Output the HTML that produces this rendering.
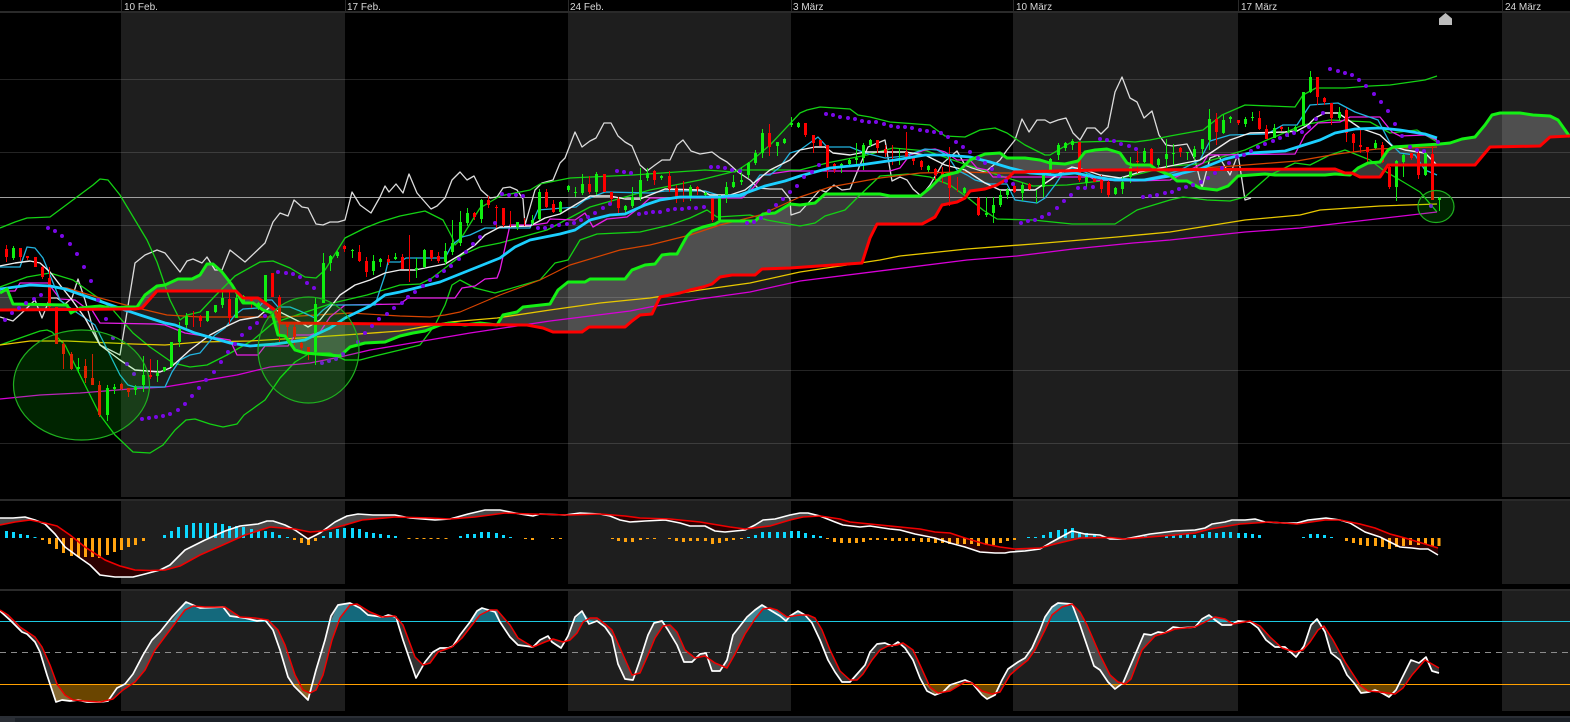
<!DOCTYPE html>
<html><head><meta charset="utf-8"><title>Chart</title>
<style>html,body{margin:0;padding:0;background:#000;width:1570px;height:722px;overflow:hidden}svg{display:block}text{font-family:"Liberation Sans",sans-serif;font-size:10px;fill:#d8d8d8}</style></head>
<body>
<svg width="1570" height="722" viewBox="0 0 1570 722" xmlns="http://www.w3.org/2000/svg">
<rect width="1570" height="722" fill="#000"/>
<g fill="#1e1e1e">
<rect x="121" y="13" width="224" height="484"/><rect x="568" y="13" width="223" height="484"/><rect x="1013" y="13" width="225" height="484"/><rect x="1502" y="13" width="68" height="484"/>
<rect x="121" y="501" width="224" height="83"/><rect x="568" y="501" width="223" height="83"/><rect x="1013" y="501" width="225" height="83"/><rect x="1502" y="501" width="68" height="83"/>
<rect x="121" y="591" width="224" height="120"/><rect x="568" y="591" width="223" height="120"/><rect x="1013" y="591" width="225" height="120"/><rect x="1502" y="591" width="68" height="120"/>
</g>
<g fill="#2a2a2a"><rect y="11" width="1570" height="2"/><rect y="499" width="1570" height="2"/><rect y="589" width="1570" height="2"/>
<rect x="121" width="1" height="12"/><rect x="345" width="1" height="12"/><rect x="568" width="1" height="12"/><rect x="791" width="1" height="12"/><rect x="1013" width="1" height="12"/><rect x="1238" width="1" height="12"/><rect x="1502" width="1" height="12"/></g>
<rect y="716" width="1570" height="2" fill="#2a2e35"/><rect y="718" width="1570" height="4" fill="#1b2027"/><rect y="718" width="15" height="4" fill="#2a2e35"/>
<text x="124" y="10">10 Feb.</text><text x="347" y="10">17 Feb.</text><text x="570" y="10">24 Feb.</text><text x="793" y="10">3 März</text><text x="1016" y="10">10 März</text><text x="1241" y="10">17 März</text><text x="1505" y="10">24 März</text>
<path d="M1445.5 13L1452 18.5V25H1439V18.5Z" fill="#bcbcbc"/>

<path fill="rgba(255,255,255,.22)" fill-rule="evenodd" d="M0 293L7 289L13 304L67 305L71 313L80 308L100 306L110 308L130 307L137 307L145 295L157 286L165 285L178 279L192 279L200 275L207 264L213 264L222 272L232 285L243 303L253 303L263 310L272 313L278 335L285 336L295 350L305 353L340 356L350 347L365 343L385 342L400 336L413 333L425 331L440 325L450 323L465 325L480 323L497 325L503 315L517 312L523 307L550 304L558 290L568 282L585 282L590 279L625 279L632 270L645 265L655 264L662 255L670 254L677 254L687 236L692 231L703 227L715 224L720 221L755 221L763 214L775 213L790 204L800 205L815 203L825 194L880 194L890 196L920 196L930 188L942 176L958 172L970 160L985 154L1000 153L1007 158L1025 158L1040 160L1050 163L1065 164L1078 161L1085 152L1095 150L1107 149L1120 153L1127 163L1132 165L1150 165L1157 170L1170 175L1177 181L1187 181L1200 188L1217 190L1228 186L1238 176L1265 174L1275 175L1325 175L1335 174L1350 175L1358 168L1368 163L1380 162L1388 150L1393 147L1440 144L1450 143L1462 139L1475 137L1485 125L1492 115L1500 113L1520 113L1533 115L1550 116L1558 120L1570 137V497H0ZM0 310L135 309L142 308L157 291L236 291L243 298L258 298L268 305L275 310L280 323L400 324L527 325L543 328L553 332L582 332L589 327L625 327L632 321L640 315L652 314L660 297L680 293L690 290L703 287L712 284L720 277L732 275L755 275L762 269L790 268L862 263L870 238L877 224L922 224L935 217L942 205L957 202L965 198L970 191L985 189L997 185L1007 179L1014 172L1100 170L1335 169L1345 173L1352 173L1360 177L1380 177L1388 165L1475 165L1490 147L1540 146L1550 137L1570 136V497H0Z"/>

<g stroke="rgba(255,255,255,.14)" stroke-width="1" shape-rendering="crispEdges"><path d="M0 79.5H1570M0 152.5H1570M0 225.5H1570M0 297.5H1570M0 370.5H1570M0 443.5H1570"/></g>
<path d="M0 197.5H1570" stroke="#a0a0a0" shape-rendering="crispEdges"/>

<g fill="none" stroke-linejoin="round">
<path stroke="#dcdcdc" stroke-width="1.3" d="M0 317L13 321L25 310L35 300L42 318L50 298L57 298L65 304L72 298L78 279L85 300L92 325L100 345L120 355L135 263L145 255L157 250L165 253L180 272L187 261L193 259L202 263L207 257L215 270L222 270L230 250L245 262L265 243L273 222L280 213L288 216L294 200L302 207L308 208L316 224L323 225L330 222L338 222L345 220L352 192L360 205L371 213L380 197L385 186L389 192L396 184L403 193L409 174L417 193L431 209L437 206L445 198L452 180L460 172L467 180L474 176L481 190L490 198L497 197L503 188L510 187L517 190L523 199L525 225L535 190L542 183L553 180L560 163L565 158L575 132L582 147L590 141L596 138L604 123L611 123L618 136L625 142L632 146L640 165L647 171L655 165L662 160L670 160L677 145L683 140L691 151L700 154L712 152L720 158L727 162L738 172L750 180L758 188L770 189L782 189L790 199L791 215L800 212L820 190L826 192L834 185L842 190L850 189L860 165L868 147L885 140L892 181L900 177L907 180L913 189L921 196L930 185L943 163L957 151L965 165L972 168L985 172L1000 160L1007 150L1015 140L1022 119L1029 132L1037 120L1045 120L1050 123L1058 120L1066 118L1073 133L1080 140L1087 128L1095 128L1101 134L1108 127L1115 92L1122 77L1130 98L1137 102L1144 118L1152 111L1159 135L1166 145L1173 146L1187 144L1195 160L1202 188L1210 158L1218 155L1230 175L1238 154L1245 200L1251 198"/>
<path stroke="#14d214" stroke-width="1.3" d="M0 228L15 222L27 218L50 217L93 185L100 179L108 180L120 195L135 220L147 240L157 262L170 300L180 320L187 315L200 312L215 296L235 276L260 262L273 261L290 268L305 277L316 278L325 270L345 238L365 228L380 222L400 216L425 211L443 220L452 237L455 245L460 240L480 208L500 196L530 190L540 184L570 178L633 175L705 170L735 172L750 162L770 145L800 113L807 110L820 107L850 109L858 115L870 117L890 122L930 125L945 136L965 137L980 130L995 128L1007 133L1025 145L1045 155L1050 155L1070 143L1080 142L1120 141L1135 142L1150 140L1170 136L1203 130L1222 115L1245 105L1295 107L1303 95L1316 88L1345 88L1370 86L1390 85L1425 80L1437 76"/>
<path stroke="#14d214" stroke-width="1.3" d="M0 287L27 277L50 273L73 280L97 297L113 310L133 333L150 347L173 363L190 367L207 365L227 355L253 340L273 323L333 303L367 295L400 285L420 284L432 278L445 268L462 255L480 247L500 243L547 230L590 207L650 190L700 180L740 170L800 170L827 163L867 155L893 148L927 151L973 167L1033 186L1067 185L1117 179L1143 173L1170 166L1200 164L1212 160L1245 150L1267 140L1303 125L1330 120L1370 122L1390 133L1417 130L1437 142"/>
<path stroke="#14d214" stroke-width="1.3" d="M0 345L20 338L40 331L47 330L52 332L65 345L85 385L100 415L115 435L133 452L150 453L163 445L175 430L186 420L195 419L210 424L223 427L237 424L244 415L265 400L280 378L295 362L310 353L330 353L345 360L360 360L375 356L400 350L420 345L435 325L445 305L452 285L460 280L475 288L495 293L540 280L555 263L568 260L580 240L597 234L640 232L670 225L690 218L707 210L717 217L750 215L767 220L800 226L815 223L825 216L845 210L860 195L880 176L908 174L930 177L950 185L967 197L983 210L997 219L1033 220L1072 224L1115 224L1137 210L1170 200L1183 197L1207 200L1230 201L1245 197L1270 175L1295 163L1310 165L1330 155L1345 150L1370 160L1383 170L1400 180L1420 192L1437 212"/>
<path stroke="#d64400" stroke-width="1.2" d="M33 285L67 288L100 298L133 307L167 315L200 317L283 317L350 313L400 316L430 317L445 315L460 312L500 295L540 280L570 265L620 250L650 245L690 235L720 225L760 215L800 197L830 187L880 178L920 173L960 172L1000 173L1040 173L1100 170L1170 170L1233 166L1297 161L1337 154L1377 149L1437 147"/>
<path stroke="#e8c800" stroke-width="1.3" d="M0 345L30 341L67 341L133 344L165 345L200 342L250 341L300 338L345 335L400 331L450 322L497 318L550 310L600 303L650 298L700 290L750 283L800 272L880 260L900 256L967 249L1033 244L1117 237L1170 232L1245 220L1300 215L1320 210L1380 206L1437 204"/>
<path stroke="#d800d8" stroke-width="1.3" d="M0 399L40 395L80 393L130 389L165 387L237 375L270 367L310 363L340 357L370 350L400 345L470 333L550 321L630 311L650 307L700 299L750 292L800 281L967 260L1017 256L1073 249L1133 243L1170 240L1245 232L1300 228L1350 222L1437 212"/>
<path stroke="#e81ee8" stroke-width="1.3" d="M0 291L15 291L20 283L48 283L60 299L75 300L83 306L92 310L100 323L155 324L165 325L185 333L230 340L237 355L258 355L265 346L288 346L295 335L310 335L320 332L330 317L345 305L400 304L408 298L455 298L462 288L475 286L485 279L497 278L500 270L510 225L533 225L547 223L550 219L575 220L585 213L593 227L607 219L627 217L640 207L650 198L742 198L753 188L763 175L790 171L890 171L900 168L910 155L925 150L935 149L945 152L957 160L970 160L977 168L987 170L993 177L1090 177L1095 180L1135 181L1170 180L1188 171L1203 163L1208 155L1295 154L1305 135L1318 123L1340 122L1350 117L1380 117L1392 132L1400 136L1425 135L1437 140"/>
<path stroke="#22b4e0" stroke-width="1.3" d="M0 267L20 267L27 247L35 248L43 258L50 275L60 300L73 310L85 318L95 325L105 345L120 375L128 385L135 387L165 387L172 372L180 360L190 355L200 353L215 335L225 328L235 315L243 309L258 308L265 300L272 300L278 307L290 307L300 311L315 318L323 310L330 305L343 305L375 305L385 275L388 262L400 262L406 258L445 258L452 245L462 237L470 235L485 228L530 228L538 210L576 207L585 200L605 192L650 193L665 191L705 191L718 195L730 197L740 197L745 195L760 175L770 175L780 167L790 153L800 150L818 137L827 147L850 147L865 153L885 158L905 156L925 149L937 150L947 155L957 170L967 175L975 180L990 184L1007 184L1015 200L1037 203L1045 198L1055 185L1065 170L1073 168L1085 172L1105 180L1120 178L1140 180L1165 175L1180 170L1200 160L1210 141L1230 135L1267 134L1283 125L1297 125L1310 105L1338 103L1355 112L1378 120L1390 143L1400 153L1415 155L1425 170L1437 175"/>
<path stroke="#eeeeee" stroke-width="1.4" d="M0 266L15 263L30 261L40 263L50 272L60 285L72 300L85 318L100 345L120 360L135 370L160 372L170 368L190 350L210 335L225 327L240 320L258 317L270 307L280 312L300 322L308 327L320 320L340 295L355 285L370 280L385 273L400 270L415 270L445 264L460 255L475 245L485 235L500 227L530 226L545 218L560 214L580 202L590 196L610 196L625 199L640 199L650 195L665 189L700 190L710 195L730 195L745 190L760 178L770 170L790 160L800 150L815 147L825 147L833 153L850 155L865 152L905 152L925 155L945 165L965 170L985 183L1000 190L1035 190L1050 180L1060 173L1072 167L1085 170L1100 175L1120 178L1140 172L1170 166L1200 160L1230 140L1250 133L1285 132L1297 131L1308 125L1315 118L1325 113L1338 113L1360 128L1380 135L1392 146L1405 150L1425 153L1437 165"/>
</g>

<g fill="none" shape-rendering="crispEdges">
<path stroke="#10e810" stroke-width="1" d="M13.5 246V260M78.5 358V373M107.5 385V421M114.5 384V394M135.5 385V395M143.5 356V392M157.5 360V382M164.5 367V372M171.5 342V367M179.5 322V347M186.5 313V328M207.5 311V322M215.5 305V313M222.5 292V308M236.5 295V318M243.5 295V303M258.5 302V310M265.5 275V302M315.5 297V365M323.5 253V303M330.5 255V271M337.5 251V258M352.5 249V258M373.5 255V275M380.5 258V267M395.5 253V260M416.5 258V278M424.5 249V268M445.5 243V265M452.5 220V255M460.5 211V246M467.5 208V226M481.5 199V223M517.5 222V230M532.5 215V225M539.5 189V220M560.5 201V213M568.5 185V192M575.5 187V197M582.5 174V195M596.5 172V195M625.5 205V213M632.5 187V208M640.5 168V201M647.5 168V181M661.5 175V180M690.5 185V201M705.5 192V197M719.5 195V222M726.5 182V203M733.5 175V188M741.5 167V185M748.5 162V178M755.5 150V165M762.5 129V158M777.5 142V156M784.5 138V144M791.5 117V127M798.5 122V128M841.5 163V173M849.5 158V167M856.5 143V165M863.5 143V170M870.5 139V147M899.5 148V165M928.5 165V172M964.5 187V194M986.5 197V217M993.5 197V223M1000.5 190V207M1007.5 188V199M1022.5 183V201M1036.5 190V203M1043.5 173V197M1050.5 158V175M1058.5 143V160M1065.5 142V151M1072.5 139V150M1086.5 173V188M1115.5 187V195M1122.5 177V194M1130.5 157V183M1144.5 148V163M1158.5 158V167M1166.5 139V168M1173.5 144V165M1187.5 152V160M1194.5 146V160M1202.5 139V154M1209.5 109V150M1223.5 115V134M1230.5 116V123M1245.5 117V127M1252.5 112V121M1274.5 124V138M1288.5 127V137M1295.5 125V133M1303.5 92V126M1310.5 71V93M1339.5 107V121M1375.5 140V149M1396.5 160V201M1403.5 154V177M1425.5 153V176M1439.5 197V211"/>
<path stroke="#10ef10" stroke-width="3" d="M13.5 248V258M78.5 367V369M107.5 388V415M114.5 387V389M135.5 387V390M143.5 375V385M157.5 373V376M164.5 367V371M171.5 342V367M179.5 329V342M186.5 316V325M207.5 311V321M215.5 305V312M222.5 298V305M236.5 298V318M243.5 296V302M258.5 303V306M265.5 275V302M315.5 304V352M323.5 263V303M330.5 256V263M337.5 252V256M352.5 250V251M373.5 261V271M380.5 259V262M395.5 257V259M416.5 268V270M424.5 250V267M445.5 251V262M452.5 243V252M460.5 222V243M467.5 213V223M481.5 200V219M517.5 222V227M532.5 220V223M539.5 192V219M560.5 202V212M568.5 186V190M575.5 192V193M582.5 184V193M596.5 174V192M625.5 206V210M632.5 197V206M640.5 180V197M647.5 173V178M661.5 176V178M690.5 187V198M705.5 193V195M719.5 195V220M726.5 187V195M733.5 182V187M741.5 180V182M748.5 163V175M755.5 153V163M762.5 133V153M777.5 142V146M784.5 139V143M791.5 123V125M798.5 123V127M841.5 164V168M849.5 160V164M856.5 158V160M863.5 145V158M870.5 140V145M928.5 166V170M964.5 188V193M986.5 213V215M993.5 205V213M1000.5 195V205M1007.5 190V195M1022.5 185V193M1043.5 173V187M1050.5 159V172M1058.5 145V155M1065.5 143V148M1072.5 141V145M1086.5 177V183M1115.5 188V194M1122.5 182V189M1130.5 167V177M1144.5 151V162M1158.5 159V165M1166.5 154V159M1173.5 153V154M1187.5 152V153M1194.5 149V157M1202.5 139V149M1209.5 119V140M1223.5 120V133M1230.5 117V119M1245.5 119V124M1252.5 117V118M1274.5 128V138M1288.5 131V132M1295.5 127V132M1303.5 92V126M1310.5 77V92M1339.5 112V118M1375.5 143V148M1396.5 161V187M1403.5 155V162M1425.5 153V175M1439.5 198V200"/>
<path stroke="#f00000" stroke-width="1" d="M6.5 245V262M20.5 248V261M27.5 256V260M35.5 257V267M42.5 266V279M49.5 267V310M56.5 307V344M63.5 342V369M71.5 352V370M85.5 359V383M92.5 354V385M99.5 381V417M121.5 383V390M128.5 388V397M150.5 359V379M193.5 311V327M200.5 315V327M229.5 291V324M251.5 297V308M272.5 273V297M279.5 295V342M287.5 322V340M294.5 323V345M301.5 340V352M308.5 347V360M344.5 245V252M359.5 245V262M366.5 257V277M388.5 255V265M402.5 254V269M409.5 235V282M431.5 250V261M438.5 252V263M474.5 212V220M488.5 196V208M496.5 205V228M503.5 208V227M510.5 211V227M524.5 218V226M546.5 189V208M553.5 200V213M589.5 176V194M604.5 174V192M611.5 192V203M618.5 197V213M654.5 170V185M669.5 171V192M676.5 185V203M683.5 181V202M697.5 186V195M712.5 197V222M769.5 124V156M805.5 123V137M813.5 135V153M820.5 140V146M827.5 145V178M834.5 163V173M877.5 140V153M885.5 145V157M892.5 145V165M906.5 132V158M913.5 158V165M921.5 160V170M935.5 168V182M942.5 167V183M949.5 147V206M957.5 177V192M978.5 197V216M1014.5 185V193M1029.5 183V190M1079.5 142V182M1094.5 178V182M1101.5 175V193M1108.5 180V197M1137.5 151V173M1151.5 148V167M1180.5 147V157M1216.5 113V145M1238.5 120V125M1259.5 111V130M1266.5 125V139M1281.5 126V131M1317.5 77V105M1324.5 97V105M1331.5 103V125M1346.5 108V142M1353.5 133V152M1360.5 130V153M1367.5 147V162M1382.5 142V163M1389.5 165V189M1411.5 153V160M1418.5 150V179M1432.5 146V200"/>
<path stroke="#ff0000" stroke-width="3" d="M6.5 249V257M20.5 248V257M27.5 256V258M35.5 257V267M42.5 267V277M49.5 278V307M56.5 307V344M63.5 344V354M71.5 354V369M85.5 366V378M92.5 378V385M99.5 385V415M121.5 384V389M128.5 388V392M150.5 375V377M200.5 316V321M229.5 299V318M251.5 298V301M272.5 273V297M279.5 297V323M287.5 322V327M294.5 327V337M301.5 343V348M308.5 347V354M344.5 246V249M359.5 252V261M366.5 261V272M388.5 259V262M402.5 257V269M431.5 250V258M438.5 256V261M474.5 213V217M488.5 200V205M496.5 207V208M503.5 208V225M546.5 192V207M553.5 204V212M589.5 184V192M604.5 174V192M611.5 192V199M618.5 199V208M654.5 171V180M669.5 176V189M676.5 188V198M697.5 187V189M712.5 197V220M769.5 133V147M805.5 123V135M813.5 135V143M820.5 140V146M827.5 145V170M834.5 164V170M877.5 140V148M885.5 149V153M906.5 152V158M913.5 158V161M921.5 161V167M935.5 169V175M942.5 172V175M949.5 175V188M978.5 198V215M1014.5 186V192M1029.5 184V189M1079.5 142V180M1094.5 178V182M1101.5 180V189M1108.5 182V195M1137.5 161V162M1151.5 149V166M1180.5 148V152M1216.5 119V132M1238.5 120V123M1259.5 118V129M1266.5 129V139M1281.5 127V129M1317.5 77V97M1324.5 98V102M1331.5 103V118M1346.5 110V133M1353.5 134V143M1360.5 145V147M1367.5 147V152M1382.5 145V162M1389.5 167V187M1411.5 153V158M1418.5 153V175M1432.5 154V200"/>
</g>

<g fill="none" stroke-linejoin="round">
<path stroke="#1ccfff" stroke-width="2.8" d="M0 289L15 287L30 285L50 286L65 289L85 296L105 303L125 310L140 315L165 323L175 325L195 333L230 343L250 346L275 344L305 340L315 335L330 328L345 318L370 306L385 295L400 292L440 282L470 270L500 258L515 247L530 240L560 234L575 230L590 220L610 215L625 214L645 205L660 200L680 197L720 197L740 195L765 186L785 181L800 176L830 168L860 165L895 160L925 155L945 155L970 157L990 162L1010 168L1030 173L1055 175L1075 173L1095 177L1115 180L1145 180L1170 176L1200 169L1225 159L1250 153L1285 151L1320 140L1335 133L1355 129L1380 128L1400 130L1425 134L1437 138"/>
<path stroke="#14f014" stroke-width="3" d="M0 293L7 289L13 304L67 305L71 313L80 308L100 306L110 308L130 307L137 307L145 295L157 286L165 285L178 279L192 279L200 275L207 264L213 264L222 272L232 285L243 303L253 303L263 310L272 313L278 335L285 336L295 350L305 353L340 356L350 347L365 343L385 342L400 336L413 333L425 331L440 325L450 323L465 325L480 323L497 325L503 315L517 312L523 307L550 304L558 290L568 282L585 282L590 279L625 279L632 270L645 265L655 264L662 255L670 254L677 254L687 236L692 231L703 227L715 224L720 221L755 221L763 214L775 213L790 204L800 205L815 203L825 194L880 194L890 196L920 196L930 188L942 176L958 172L970 160L985 154L1000 153L1007 158L1025 158L1040 160L1050 163L1065 164L1078 161L1085 152L1095 150L1107 149L1120 153L1127 163L1132 165L1150 165L1157 170L1170 175L1177 181L1187 181L1200 188L1217 190L1228 186L1238 176L1265 174L1275 175L1325 175L1335 174L1350 175L1358 168L1368 163L1380 162L1388 150L1393 147L1440 144L1450 143L1462 139L1475 137L1485 125L1492 115L1500 113L1520 113L1533 115L1550 116L1558 120L1570 137"/>
<path stroke="#ff0000" stroke-width="3" d="M0 310L135 309L142 308L157 291L236 291L243 298L258 298L268 305L275 310L280 323L400 324L527 325L543 328L553 332L582 332L589 327L625 327L632 321L640 315L652 314L660 297L680 293L690 290L703 287L712 284L720 277L732 275L755 275L762 269L790 268L862 263L870 238L877 224L922 224L935 217L942 205L957 202L965 198L970 191L985 189L997 185L1007 179L1014 172L1100 170L1335 169L1345 173L1352 173L1360 177L1380 177L1388 165L1475 165L1490 147L1540 146L1550 137L1570 136"/>
<path stroke="#7a08e8" stroke-width="4" stroke-linecap="round" d="M5 320h0M12 313h0M19 308h0M26 303h0M34 299h0M41 295h0M48 228h0M55 231h0M62 236h0M70 244h0M77 254h0M84 267h0M91 281h0M98 300h0M106 319h0M113 338h0M127 364h0M134 374h0M142 419h0M149 418h0M156 417h0M163 416h0M170 414h0M178 410h0M185 404h0M192 396h0M199 388h0M206 380h0M214 372h0M221 362h0M228 352h0M235 344h0M242 335h0M250 328h0M257 323h0M265 316h0M278 272h0M286 273h0M293 274h0M300 277h0M307 283h0M314 288h0M322 363h0M329 361h0M336 359h0M343 354h0M358 342h0M365 333h0M372 326h0M379 319h0M387 314h0M394 308h0M402 303h0M408 297h0M415 292h0M423 286h0M430 280h0M437 276h0M444 271h0M451 266h0M459 259h0M466 252h0M473 244h0M480 237h0M495 223h0M502 194h0M509 195h0M516 195h0M523 196h0M538 228h0M545 228h0M552 226h0M559 225h0M567 224h0M574 223h0M581 220h0M588 217h0M595 213h0M603 208h0M610 204h0M617 171h0M624 172h0M631 173h0M639 214h0M646 213h0M653 212h0M660 212h0M668 210h0M675 209h0M682 209h0M689 208h0M696 208h0M704 207h0M711 167h0M718 167h0M725 168h0M732 170h0M740 171h0M747 223h0M754 222h0M761 218h0M769 211h0M776 205h0M783 199h0M790 192h0M797 186h0M804 177h0M812 172h0M819 165h0M826 114h0M833 115h0M840 117h0M848 118h0M855 119h0M862 121h0M869 122h0M876 122h0M884 124h0M891 126h0M898 127h0M905 127h0M912 128h0M920 130h0M927 131h0M934 132h0M941 133h0M948 137h0M956 142h0M963 147h0M970 152h0M978 158h0M985 163h0M992 169h0M999 176h0M1006 181h0M1013 184h0M1021 223h0M1028 221h0M1035 220h0M1042 217h0M1049 214h0M1057 208h0M1064 201h0M1071 195h0M1078 188h0M1085 188h0M1093 187h0M1100 139h0M1107 140h0M1114 141h0M1121 144h0M1129 146h0M1136 149h0M1143 197h0M1150 196h0M1157 195h0M1165 193h0M1172 192h0M1179 189h0M1186 187h0M1193 185h0M1201 182h0M1208 178h0M1215 173h0M1222 168h0M1229 163h0M1237 157h0M1244 155h0M1251 151h0M1258 147h0M1265 144h0M1273 141h0M1280 138h0M1287 135h0M1294 133h0M1302 132h0M1309 127h0M1316 119h0M1323 113h0M1330 69h0M1338 71h0M1345 73h0M1352 75h0M1359 80h0M1366 86h0M1374 94h0M1381 102h0M1388 111h0M1395 124h0M1402 136h0M1410 147h0M1417 150h0M1424 151h0M1431 206h0M1438 142h0"/>
</g>

<g fill="rgba(0,255,0,.14)" stroke="#1fb01f" stroke-width="1.2">
<ellipse cx="81.5" cy="385" rx="68" ry="55"/>
<ellipse cx="308.5" cy="350" rx="50.5" ry="53"/>
<ellipse cx="1436" cy="206.5" rx="18" ry="16"/>
</g>

<defs>
<path id="mf" fill-rule="evenodd" d="M0 518L13 518L25 517L35 520L45 524L55 534L65 547L80 558L90 565L100 575L115 577L133 577L145 574L160 570L170 565L185 550L205 540L225 531L240 526L258 524L267 521L273 521L285 525L295 530L308 539L320 533L335 522L347 516L358 514L373 515L395 515L410 518L435 520L450 519L468 514L485 510L500 510L510 512L520 514L533 516L540 514L565 515L580 513L600 514L610 516L620 520L630 522L645 521L665 520L680 523L690 526L705 526L715 531L725 532L745 530L755 525L763 520L775 519L790 515L800 513L808 513L820 516L835 522L843 525L860 527L870 526L890 529L900 530L915 534L935 538L950 543L965 547L980 552L995 553L1005 553L1010 552L1025 551L1040 549L1050 543L1072 531L1085 534L1100 535L1110 539L1125 539L1140 536L1150 534L1175 531L1195 530L1205 528L1212 524L1225 522L1232 520L1245 520L1255 519L1265 522L1285 523L1297 523L1308 520L1326 518L1340 520L1350 523L1365 532L1380 537L1390 542L1400 547L1412 548L1420 549L1428 549L1438 555V584H0ZM0 525L15 522L30 520L45 523L57 526L70 535L85 547L105 560L120 566L135 570L150 570.5L165 570L180 566L200 555L225 544L245 535L270 527L295 529L310 532L322 531L345 525L362 520L395 517L430 518L450 519L475 517L505 513L530 514L570 515L600 514L625 516L640 518L670 519L700 522L730 527L745 529L770 526L790 520L803 517L820 516L840 519L850 522L870 524L900 527L920 529L935 532L950 533L965 538L985 544L1000 547L1015 549L1040 548L1055 544L1080 538L1110 537.5L1125 539L1150 537L1175 535L1195 533L1210 529L1240 524L1270 522L1297 524L1325 520L1340 520L1360 524L1375 528L1390 534L1405 538L1425 544L1438 548V584H0Z"/>
<clipPath id="dr"><rect x="40" y="501" width="118" height="83"/><rect x="295" y="501" width="23" height="83"/><rect x="520" y="501" width="225" height="83"/><rect x="820" y="501" width="195" height="83"/><rect x="1335" y="501" width="104" height="83"/></clipPath>
</defs>
<use href="#mf" fill="#484848"/>
<use href="#mf" fill="#2c0000" clip-path="url(#dr)"/>
<g fill="none" stroke-width="2.7" shape-rendering="crispEdges">
<path stroke="#0cd8ff" d="M6.5 538V531M13.5 538V532M20.5 538V534M27.5 538V535M35 538V537M164.5 538V535M171.5 538V531M178.5 538V527M186.5 538V525M193.5 538V523M200.5 538V523M207.5 538V523M215.5 538V523M222.5 538V524M229.5 538V526M236.5 538V526M243.5 538V527M251.5 538V529M258.5 538V530M265.5 538V531M272.5 538V532M279.5 538V535M287.5 538V537M323.5 538V536M330.5 538V532M337.5 538V529M344.5 538V528M352.5 538V528M359.5 538V529M366.5 538V532M373.5 538V533M380.5 538V534M388.5 538V535M395.5 538V536M460.5 538V536M467.5 538V534M474.5 538V534M481.5 538V532M488.5 538V532M496.5 538V533M503.5 538V535M510.5 538V537M748.5 538V537M755.5 538V535M762.5 538V532M769.5 538V532M777.5 538V532M784.5 538V532M791.5 538V531M798.5 538V531M805.5 538V533M813.5 538V535M820.5 538V536M1028.5 538V537M1035.5 538V537M1043.5 538V535M1050.5 538V532M1058.5 538V530M1065.5 538V529M1072.5 538V528M1079.5 538V532M1086.5 538V533M1094.5 538V535M1145.5 538V536M1166.5 538V536M1173.5 538V535M1180.5 538V534M1187.5 538V534M1194.5 538V535M1202.5 538V534M1209.5 538V532M1216.5 538V533M1223.5 538V532M1230.5 538V532M1238.5 538V533M1245.5 538V533M1252.5 538V534M1259.5 538V535M1303.5 538V537M1310.5 538V534M1317.5 538V534M1324.5 538V535M1331.5 538V537"/>
<path stroke="#ffa30f" d="M42.5 538V540M49.5 538V544M56.5 538V549M63.5 538V553M71.5 538V556M78.5 538V557M85.5 538V557M92.5 538V557M99.5 538V558M107.5 538V555M114.5 538V552M121.5 538V550M128.5 538V547M135.5 538V545M143.5 538V541M294.5 538V540M301.5 538V543M308.5 538V545M315.5 538V541M409 538V539M417 538V539M424 538V539M431 538V539M438 538V539M446 538V539M525.5 538V539M532.5 538V540M552.5 538V539M560.5 538V539M612.5 538V539M618.5 538V541M625.5 538V542M632.5 538V542M640.5 538V540M647.5 538V539M654.5 538V539M669.5 538V539M676.5 538V541M683.5 538V542M690.5 538V541M697.5 538V541M705.5 538V541M712.5 538V544M719.5 538V543M726.5 538V541M733.5 538V540M741.5 538V539M827.5 538V539M834.5 538V542M841.5 538V543M849.5 538V543M856.5 538V543M863.5 538V542M870.5 538V540M877.5 538V540M885.5 538V540M892.5 538V541M899.5 538V541M906.5 538V541M913.5 538V541M921.5 538V542M928.5 538V542M935.5 538V543M942.5 538V543M949.5 538V544M957.5 538V544M964.5 538V544M971.5 538V544M978.5 538V546M986.5 538V545M993.5 538V545M1000.5 538V543M1007.5 538V541M1014.5 538V540M1346.5 538V541M1353.5 538V543M1360.5 538V545M1367.5 538V546M1375.5 538V546M1382.5 538V547M1389.5 538V549M1396.5 538V547M1403.5 538V546M1410.5 538V545M1418.5 538V545M1425.5 538V544M1432.5 538V546M1439 538V546"/>
</g>
<g fill="none" stroke-linejoin="round">
<path stroke="#fff" stroke-width="1.6" d="M0 518L13 518L25 517L35 520L45 524L55 534L65 547L80 558L90 565L100 575L115 577L133 577L145 574L160 570L170 565L185 550L205 540L225 531L240 526L258 524L267 521L273 521L285 525L295 530L308 539L320 533L335 522L347 516L358 514L373 515L395 515L410 518L435 520L450 519L468 514L485 510L500 510L510 512L520 514L533 516L540 514L565 515L580 513L600 514L610 516L620 520L630 522L645 521L665 520L680 523L690 526L705 526L715 531L725 532L745 530L755 525L763 520L775 519L790 515L800 513L808 513L820 516L835 522L843 525L860 527L870 526L890 529L900 530L915 534L935 538L950 543L965 547L980 552L995 553L1005 553L1010 552L1025 551L1040 549L1050 543L1072 531L1085 534L1100 535L1110 539L1125 539L1140 536L1150 534L1175 531L1195 530L1205 528L1212 524L1225 522L1232 520L1245 520L1255 519L1265 522L1285 523L1297 523L1308 520L1326 518L1340 520L1350 523L1365 532L1380 537L1390 542L1400 547L1412 548L1420 549L1428 549L1438 555"/>
<path stroke="#f00000" stroke-width="1.6" d="M0 525L15 522L30 520L45 523L57 526L70 535L85 547L105 560L120 566L135 570L150 570.5L165 570L180 566L200 555L225 544L245 535L270 527L295 529L310 532L322 531L345 525L362 520L395 517L430 518L450 519L475 517L505 513L530 514L570 515L600 514L625 516L640 518L670 519L700 522L730 527L745 529L770 526L790 520L803 517L820 516L840 519L850 522L870 524L900 527L920 529L935 532L950 533L965 538L985 544L1000 547L1015 549L1040 548L1055 544L1080 538L1110 537.5L1125 539L1150 537L1175 535L1195 533L1210 529L1240 524L1270 522L1297 524L1325 520L1340 520L1360 524L1375 528L1390 534L1405 538L1425 544L1438 548"/>
</g>

<g fill="#14697c">
<polygon points="172,621 186,602 193,605 200,607 225,607 230,616 245,618 257,621"/>
<polygon points="331,621 338,605 350,603 360,608 368,615 382,617 395,617 396,621"/>
<polygon points="470,621 477,611 482,608 497,610 500,621"/>
<polygon points="574,621 582,611 590,620 594,621"/>
<polygon points="745,621 755,610 762,605 770,608 777,610 787,617 790,616 798,611 805,615 812,621"/>
<polygon points="1043,621 1052,607 1060,603 1072,604 1078,621"/>
<polygon points="1203,621 1209,615 1215,617 1225,619 1228,621"/>
</g>
<g fill="#6a4500">
<polygon points="50,684 56,702 62,700 70,701 78,700 87,702 100,702 108,701 117,689 124,684"/>
<polygon points="294,684 308,700 313,684"/>
<polygon points="925,684 935,695 943,692 950,691 962,684 975,684 982,695 987,699 995,695 1000,684"/>
<polygon points="1110,684 1115,689 1122,684"/>
<polygon points="1355,684 1361,693 1369,692 1375,691 1382,693 1389,697 1396,690 1400,684"/>
</g>
<path fill="rgba(255,255,255,.2)" fill-rule="evenodd" d="M0 611L10 620L22 632L27 634L35 642L40 652L47 675L56 702L62 700L70 701L78 700L87 702L100 702L108 701L117 688L125 684L133 674L143 655L152 640L160 632L172 617L186 602L193 605L200 608L223 607L230 616L245 618L257 621L265 620L273 630L280 650L288 677L294 686L308 700L316 670L325 640L331 616L338 605L350 603L360 608L368 615L383 617L388 615L396 617L403 640L416 678L425 662L433 652L440 648L448 648L453 646L460 635L470 622L477 611L482 608L495 612L500 622L510 637L518 645L533 647L540 640L548 636L552 642L561 648L568 636L575 617L582 611L589 624L597 621L605 627L612 637L618 664L625 679L633 680L640 660L648 635L654 623L662 621L668 630L677 645L684 662L692 662L700 654L706 653L712 671L720 671L727 660L733 635L747 617L755 610L762 605L770 610L780 616L786 621L790 616L798 611L805 615L812 623L820 640L828 660L835 672L842 682L850 682L858 673L865 665L870 652L877 644L885 643L892 646L898 642L905 648L913 660L920 678L927 691L935 695L943 692L950 685L965 680L972 683L982 695L987 699L995 695L1002 680L1008 669L1018 662L1025 658L1032 648L1040 630L1045 617L1052 607L1058 603L1072 604L1080 625L1094 666L1100 670L1108 682L1115 689L1123 683L1135 655L1144 634L1151 635L1158 632L1165 633L1173 627L1180 628L1195 627L1202 619L1209 615L1215 620L1222 625L1231 625L1238 621L1250 622L1258 628L1266 640L1275 647L1285 647L1296 657L1304 646L1311 625L1317 619L1325 632L1331 653L1340 660L1347 675L1354 683L1361 693L1369 692L1375 690L1382 693L1389 697L1396 690L1403 676L1411 660L1419 663L1426 657L1432 671L1439 673V711H0ZM0 610L8 615L20 627L35 637L42 647L50 665L57 684L65 695L73 700L85 701L100 702L113 699L123 690L135 682L145 670L155 650L170 630L185 610L193 606L205 607L225 607L240 617L255 618L268 620L278 630L285 645L295 675L303 690L310 693L316 690L323 675L332 640L340 618L350 605L357 604L370 612L382 617L395 616L403 625L415 657L423 665L430 663L438 652L452 647L462 638L472 625L480 615L490 610L497 610L510 625L518 638L533 647L545 642L553 639L563 642L570 640L577 633L583 622L590 618L597 618L605 624L612 630L620 648L632 675L640 673L648 655L655 638L663 626L670 625L677 632L685 650L695 658L705 656L715 663L727 668L735 654L745 634L755 619L763 609L770 608L777 610L787 617L800 615L808 615L815 618L822 630L830 650L840 671L850 680L857 680L863 674L872 660L880 650L888 646L897 645L903 643L913 650L920 665L930 687L938 693L950 691L965 682L972 683L982 691L992 694L1000 692L1010 675L1018 668L1028 660L1035 650L1045 630L1052 615L1062 607L1072 604L1080 612L1087 625L1100 655L1110 675L1118 682L1125 684L1131 679L1142 650L1155 636L1165 633L1175 629L1195 627L1205 622L1215 617L1225 619L1233 624L1250 621L1260 626L1270 637L1282 648L1295 652L1303 650L1310 642L1318 630L1324 626L1333 640L1345 662L1360 685L1368 691L1380 692L1395 694L1403 688L1412 675L1425 660L1439 668V711H0Z"/>
<path d="M0 621.5H1570" stroke="#1cc8e0" shape-rendering="crispEdges"/>
<path d="M0 684.5H1570" stroke="#ffa000" shape-rendering="crispEdges"/>
<path d="M0 652.5H1570" stroke="#8c8c8c" stroke-dasharray="6 5" shape-rendering="crispEdges"/>
<g fill="none" stroke-linejoin="round">
<path stroke="#fff" stroke-width="1.7" d="M0 611L10 620L22 632L27 634L35 642L40 652L47 675L56 702L62 700L70 701L78 700L87 702L100 702L108 701L117 688L125 684L133 674L143 655L152 640L160 632L172 617L186 602L193 605L200 608L223 607L230 616L245 618L257 621L265 620L273 630L280 650L288 677L294 686L308 700L316 670L325 640L331 616L338 605L350 603L360 608L368 615L383 617L388 615L396 617L403 640L416 678L425 662L433 652L440 648L448 648L453 646L460 635L470 622L477 611L482 608L495 612L500 622L510 637L518 645L533 647L540 640L548 636L552 642L561 648L568 636L575 617L582 611L589 624L597 621L605 627L612 637L618 664L625 679L633 680L640 660L648 635L654 623L662 621L668 630L677 645L684 662L692 662L700 654L706 653L712 671L720 671L727 660L733 635L747 617L755 610L762 605L770 610L780 616L786 621L790 616L798 611L805 615L812 623L820 640L828 660L835 672L842 682L850 682L858 673L865 665L870 652L877 644L885 643L892 646L898 642L905 648L913 660L920 678L927 691L935 695L943 692L950 685L965 680L972 683L982 695L987 699L995 695L1002 680L1008 669L1018 662L1025 658L1032 648L1040 630L1045 617L1052 607L1058 603L1072 604L1080 625L1094 666L1100 670L1108 682L1115 689L1123 683L1135 655L1144 634L1151 635L1158 632L1165 633L1173 627L1180 628L1195 627L1202 619L1209 615L1215 620L1222 625L1231 625L1238 621L1250 622L1258 628L1266 640L1275 647L1285 647L1296 657L1304 646L1311 625L1317 619L1325 632L1331 653L1340 660L1347 675L1354 683L1361 693L1369 692L1375 690L1382 693L1389 697L1396 690L1403 676L1411 660L1419 663L1426 657L1432 671L1439 673"/>
<path stroke="#f00000" stroke-width="1.5" d="M0 610L8 615L20 627L35 637L42 647L50 665L57 684L65 695L73 700L85 701L100 702L113 699L123 690L135 682L145 670L155 650L170 630L185 610L193 606L205 607L225 607L240 617L255 618L268 620L278 630L285 645L295 675L303 690L310 693L316 690L323 675L332 640L340 618L350 605L357 604L370 612L382 617L395 616L403 625L415 657L423 665L430 663L438 652L452 647L462 638L472 625L480 615L490 610L497 610L510 625L518 638L533 647L545 642L553 639L563 642L570 640L577 633L583 622L590 618L597 618L605 624L612 630L620 648L632 675L640 673L648 655L655 638L663 626L670 625L677 632L685 650L695 658L705 656L715 663L727 668L735 654L745 634L755 619L763 609L770 608L777 610L787 617L800 615L808 615L815 618L822 630L830 650L840 671L850 680L857 680L863 674L872 660L880 650L888 646L897 645L903 643L913 650L920 665L930 687L938 693L950 691L965 682L972 683L982 691L992 694L1000 692L1010 675L1018 668L1028 660L1035 650L1045 630L1052 615L1062 607L1072 604L1080 612L1087 625L1100 655L1110 675L1118 682L1125 684L1131 679L1142 650L1155 636L1165 633L1175 629L1195 627L1205 622L1215 617L1225 619L1233 624L1250 621L1260 626L1270 637L1282 648L1295 652L1303 650L1310 642L1318 630L1324 626L1333 640L1345 662L1360 685L1368 691L1380 692L1395 694L1403 688L1412 675L1425 660L1439 668"/>
</g>
</svg>
</body></html>
